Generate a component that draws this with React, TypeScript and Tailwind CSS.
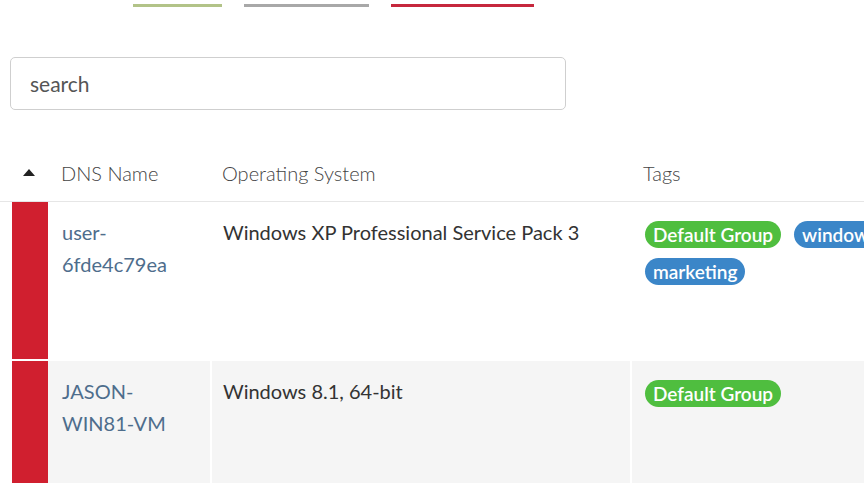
import React from 'react';

interface Host {
  dns: string[];
  os: string;
  tags: { label: string; color: 'green' | 'blue' }[];
  shaded?: boolean;
}

const hosts: Host[] = [
  {
    dns: ['user-', '6fde4c79ea'],
    os: 'Windows XP Professional Service Pack 3',
    tags: [
      { label: 'Default Group', color: 'green' },
      { label: 'windows', color: 'blue' },
      { label: 'marketing', color: 'blue' },
    ],
  },
  {
    dns: ['JASON-', 'WIN81-VM'],
    os: 'Windows 8.1, 64-bit',
    tags: [{ label: 'Default Group', color: 'green' }],
    shaded: true,
  },
];

function Tag({ label, color }: { label: string; color: 'green' | 'blue' }) {
  return (
    <span
      className={
        'inline-flex h-[27px] items-center whitespace-nowrap rounded-full px-[8px] text-[19px] font-semibold leading-none text-white ' +
        (color === 'green' ? 'bg-[#4fbe3f]' : 'bg-[#3b86c8]')
      }
    >
      {label}
    </span>
  );
}

export default function App() {
  return (
    <div
      className="h-[483px] w-[864px] overflow-hidden bg-white text-[#333]"
      style={{ fontFamily: 'Lato, "Open Sans", sans-serif' }}
    >
      {/* status filters, cut off at the top */}
      <div className="flex gap-[22px] pl-[133px] pt-[4px]">
        <div className="h-[3px] w-[89px] bg-[#b2c388]" />
        <div className="h-[3px] w-[125px] bg-[#a8a8a8]" />
        <div className="h-[3px] w-[143px] bg-[#c6283d]" />
      </div>

      <div className="px-[10px] pt-[50px]">
        <div className="flex h-[53px] w-[556px] items-center rounded-[5px] border border-[#cfcfcf] px-[19px] text-[21px] text-[#555]">
          search
        </div>
      </div>

      {/* header */}
      <div className="mt-[37px] flex h-[55px] items-center border-b border-[#e6e6e6] pb-[3px] text-[20px] font-light text-[#444]">
        <div className="flex w-[48px] shrink-0 justify-center pl-[10px]">
          <svg width="12" height="7" viewBox="0 0 12 7">
            <path d="M0 7 L6 0 L12 7 Z" fill="#222" />
          </svg>
        </div>
        <div className="w-[162px] shrink-0 pl-[13px]">DNS Name</div>
        <div className="w-[420px] shrink-0 pl-[12px]">Operating System</div>
        <div className="pl-[13px]">Tags</div>
      </div>

      {hosts.map((h, i) => (
        <div
          key={i}
          className={'flex pl-[12px] ' + (i === 0 ? 'h-[159px] border-b-2 border-white' : 'h-[200px]')}
        >
          <div className="w-[36px] shrink-0 bg-[#d01f2f]" />
          <div className="flex min-w-0 flex-1 gap-[2px] bg-white">
            <div
              className={
                'w-[162px] shrink-0 pl-[14px] pt-[14px] text-[20px] leading-[32px] text-[#4e6d8c] ' +
                (h.shaded ? 'bg-[#f5f5f5]' : '')
              }
            >
              {h.dns.map((l) => (
                <div key={l}>{l}</div>
              ))}
            </div>
            <div
              className={
                'w-[418px] shrink-0 pl-[11px] pt-[14px] text-[20px] leading-[32px] text-[#333] ' +
                (h.shaded ? 'bg-[#f5f5f5]' : '')
              }
            >
              {h.os}
            </div>
            <div className={'min-w-0 flex-1 pl-[13px] pt-[19px] ' + (h.shaded ? 'bg-[#f5f5f5]' : '')}>
              <div className="flex w-[250px] flex-wrap gap-x-[13px] gap-y-[10px]">
                {h.tags.map((t) => (
                  <Tag key={t.label} label={t.label} color={t.color} />
                ))}
              </div>
            </div>
          </div>
        </div>
      ))}
    </div>
  );
}
